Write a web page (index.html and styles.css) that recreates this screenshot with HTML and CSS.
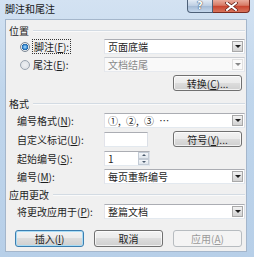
FILE: index.html
```html
<!DOCTYPE html>
<html lang="zh-CN">
<head>
    <meta charset="UTF-8">
    <title>脚注和尾注</title>
    <link rel="stylesheet" href="styles.css">
</head>
<body>
    <div class="window">
        <div class="titlebar">
            <span class="title">脚注和尾注</span>
            <div class="caption-btns">
                <span class="cap help">?</span>
                <span class="cap close">
                    <svg width="13" height="9" viewBox="0 0 13 9">
                        <path d="M2 1 L11 8 M11 1 L2 8" stroke="#5b1a12" stroke-width="3.4" stroke-linecap="square"/>
                        <path d="M2 1 L11 8 M11 1 L2 8" stroke="#fff" stroke-width="2" stroke-linecap="square"/>
                    </svg>
                </span>
            </div>
        </div>

        <div class="panel">
            <div class="section first">位置</div>

            <div class="row tight">
                <div class="radio-label">
                    <span class="radio checked"></span>
                    <span class="focus">脚注(<u>F</u>):</span>
                </div>
                <div class="select">页面底端<span class="arrow"></span></div>
            </div>

            <div class="row">
                <div class="radio-label">
                    <span class="radio"></span>
                    <span>尾注(<u>E</u>):</span>
                </div>
                <div class="select disabled">文档结尾<span class="arrow"></span></div>
            </div>

            <div class="row tall">
                <div></div>
                <div class="btn side">转换(<u>C</u>)...</div>
            </div>

            <div class="section later">格式</div>

            <div class="row">
                <div class="label">编号格式(<u>N</u>):</div>
                <div class="select"><span class="numbers">①, ②, ③ ⋯</span><span class="arrow"></span></div>
            </div>

            <div class="row tall">
                <div class="label">自定义标记(<u>U</u>):</div>
                <div class="custom">
                    <div class="textbox"></div>
                    <div class="btn side">符号(<u>Y</u>)...</div>
                </div>
            </div>

            <div class="row loose">
                <div class="label">起始编号(<u>S</u>):</div>
                <div class="spin">
                    <span class="spin-value">1</span>
                    <span class="spin-btns"><span class="up"></span><span class="down"></span></span>
                </div>
            </div>

            <div class="row">
                <div class="label">编号(<u>M</u>):</div>
                <div class="select">每页重新编号<span class="arrow"></span></div>
            </div>

            <div class="section mid">应用更改</div>

            <div class="row">
                <div class="label">将更改应用于(<u>P</u>):</div>
                <div class="select">整篇文档<span class="arrow"></span></div>
            </div>

            <div class="actions">
                <div class="btn default">插入(<u>I</u>)</div>
                <div class="btn">取消</div>
                <div class="btn disabled">应用(<u>A</u>)</div>
            </div>
        </div>
    </div>
</body>
</html>
```

FILE: styles.css
```css
* {
    margin: 0;
    padding: 0;
    box-sizing: border-box;
}

body {
    width: 254px;
    height: 257px;
    overflow: hidden;
    font-family: "Noto Sans CJK SC", "Noto Sans", sans-serif;
    font-size: 10px;
    color: #1e1e1e;
}

u {
    text-decoration: underline;
    text-underline-offset: 1px;
}

.window {
    width: 254px;
    height: 257px;
    padding: 0 7px 0 5px;
    background: linear-gradient(180deg, #d3e2f2 0%, #c0d6ec 35%, #b7cfe8 100%);
}

.titlebar {
    height: 19px;
    display: flex;
    justify-content: space-between;
    align-items: flex-start;
}

.title {
    line-height: 17px;
    color: #1a1a1a;
}

.caption-btns {
    display: flex;
    margin-right: -3px;
}

.cap {
    height: 13px;
    border: 1px solid #4d6078;
    border-top: none;
    display: flex;
    align-items: center;
    justify-content: center;
}

.help {
    width: 26px;
    border-radius: 0 0 0 4px;
    background: linear-gradient(#e3ebf5 0%, #bccde2 50%, #a5bbd5 51%, #c5d7ec 100%);
    color: #fff;
    font-family: "DejaVu Sans", sans-serif;
    font-weight: bold;
    font-size: 10px;
    line-height: 12px;
    text-shadow: 0 0 1px #2b3d55, 0 0 1px #2b3d55;
}

.close {
    width: 37px;
    border-left: none;
    border-color: #7a2a1f;
    border-radius: 0 0 4px 0;
    background: linear-gradient(#e9ab9c 0%, #d77a65 45%, #c8432e 50%, #d8735b 100%);
}

.panel {
    height: 233px;
    background: #f0f0f0;
    border: 1px solid #a4b6cb;
}

.section {
    display: flex;
    align-items: center;
    gap: 4px;
    height: 13px;
    line-height: 13px;
    padding: 0 1px 0 3px;
}

.section::after {
    content: "";
    flex: 1;
    height: 1px;
    background: #d3dbe3;
    box-shadow: 0 1px 0 #fafafa;
}

.section.first {
    margin-top: 4px;
}

.section.later {
    margin-top: 6px;
}

.section.mid {
    margin-top: 4px;
}

.row {
    display: grid;
    grid-template-columns: 98px 141px;
    align-items: center;
    height: 15px;
    margin-top: 3px;
    line-height: 13px;
}

.row.tight {
    margin-top: 2px;
}

.row.loose {
    margin-top: 4px;
}

.row.tall {
    height: 16px;
}

.label {
    padding-left: 11px;
    white-space: nowrap;
}

.radio-label {
    display: flex;
    align-items: center;
    gap: 3px;
    padding-left: 14px;
    white-space: nowrap;
}

.radio {
    width: 10px;
    height: 10px;
    border-radius: 50%;
    border: 1px solid #9aa4b0;
    background: radial-gradient(circle, #eef0f3 0%, #d9dde2 100%);
}

.radio.checked {
    border-color: #7b8794;
    background: radial-gradient(circle, #aee0ff 0%, #3d8fd6 35%, #1c5c9c 55%, #e9ecef 62%, #d3d8de 100%);
}

.focus {
    outline: 1px dotted #333;
    outline-offset: 0;
    padding: 0 1px;
}

.select {
    height: 15px;
    display: flex;
    align-items: center;
    justify-content: space-between;
    padding: 0 1px 0 3px;
    background: #fff;
    border: 1px solid;
    border-color: #abadb3 #dbdfe6 #e3e9ef #e2e3ea;
    white-space: nowrap;
}

.numbers {
    word-spacing: 3px;
}

.arrow {
    width: 11px;
    height: 11px;
    display: flex;
    align-items: center;
    justify-content: center;
    border: 1px solid #a9a9a9;
    background: linear-gradient(#f2f2f2, #d2d2d2);
}

.arrow::before {
    content: "";
    border-left: 3px solid transparent;
    border-right: 3px solid transparent;
    border-top: 3px solid #1e1e1e;
}

.select.disabled {
    color: #8a8a8a;
    background: #f9f9f9;
    border-color: #c9ccd1 #e2e4e8 #e6e9ee #e4e6ea;
}

.select.disabled .arrow {
    border-color: #e0e0e0;
    background: #fafafa;
}

.select.disabled .arrow::before {
    border-top-color: #888;
}

.btn {
    width: 69px;
    height: 16px;
    display: flex;
    align-items: center;
    justify-content: center;
    border: 1px solid #707070;
    border-radius: 3px;
    background: linear-gradient(#f3f3f3 0%, #ebebeb 48%, #dddddd 50%, #cfcfcf 100%);
    box-shadow: inset 0 0 0 1px rgba(255, 255, 255, 0.7);
    line-height: 13px;
    white-space: nowrap;
}

.btn.side {
    justify-self: end;
    margin-right: 3px;
}

.custom {
    display: flex;
    justify-content: space-between;
    align-items: center;
}

.textbox {
    width: 44px;
    height: 15px;
    background: #fff;
    border: 1px solid;
    border-color: #abadb3 #dbdfe6 #e3e9ef #e2e3ea;
}

.spin {
    width: 46px;
    height: 15px;
    display: flex;
    background: #fff;
    border: 1px solid;
    border-color: #abadb3 #dbdfe6 #e3e9ef #e2e3ea;
}

.spin-value {
    flex: 1;
    padding-left: 3px;
}

.spin-btns {
    width: 11px;
    display: flex;
    flex-direction: column;
}

.spin-btns span {
    flex: 1;
    display: flex;
    align-items: center;
    justify-content: center;
    border: 1px solid #c3cbd5;
    background: linear-gradient(#f4f6f9, #dfe5ec);
}

.spin-btns .up::before {
    content: "";
    border-left: 2px solid transparent;
    border-right: 2px solid transparent;
    border-bottom: 2px solid #4a5a6c;
}

.spin-btns .down::before {
    content: "";
    border-left: 2px solid transparent;
    border-right: 2px solid transparent;
    border-top: 2px solid #4a5a6c;
}

.actions {
    display: flex;
    gap: 10px;
    margin-top: 11px;
    padding-left: 9px;
}

.actions .btn {
    height: 17px;
}

.btn.default {
    border-color: #3c7fb1;
    box-shadow: inset 0 0 0 1px #a9dcf5;
}

.btn.disabled {
    color: #9a9a9a;
    border-color: #b7bcc0;
    background: #f4f4f4;
    box-shadow: none;
}
```
